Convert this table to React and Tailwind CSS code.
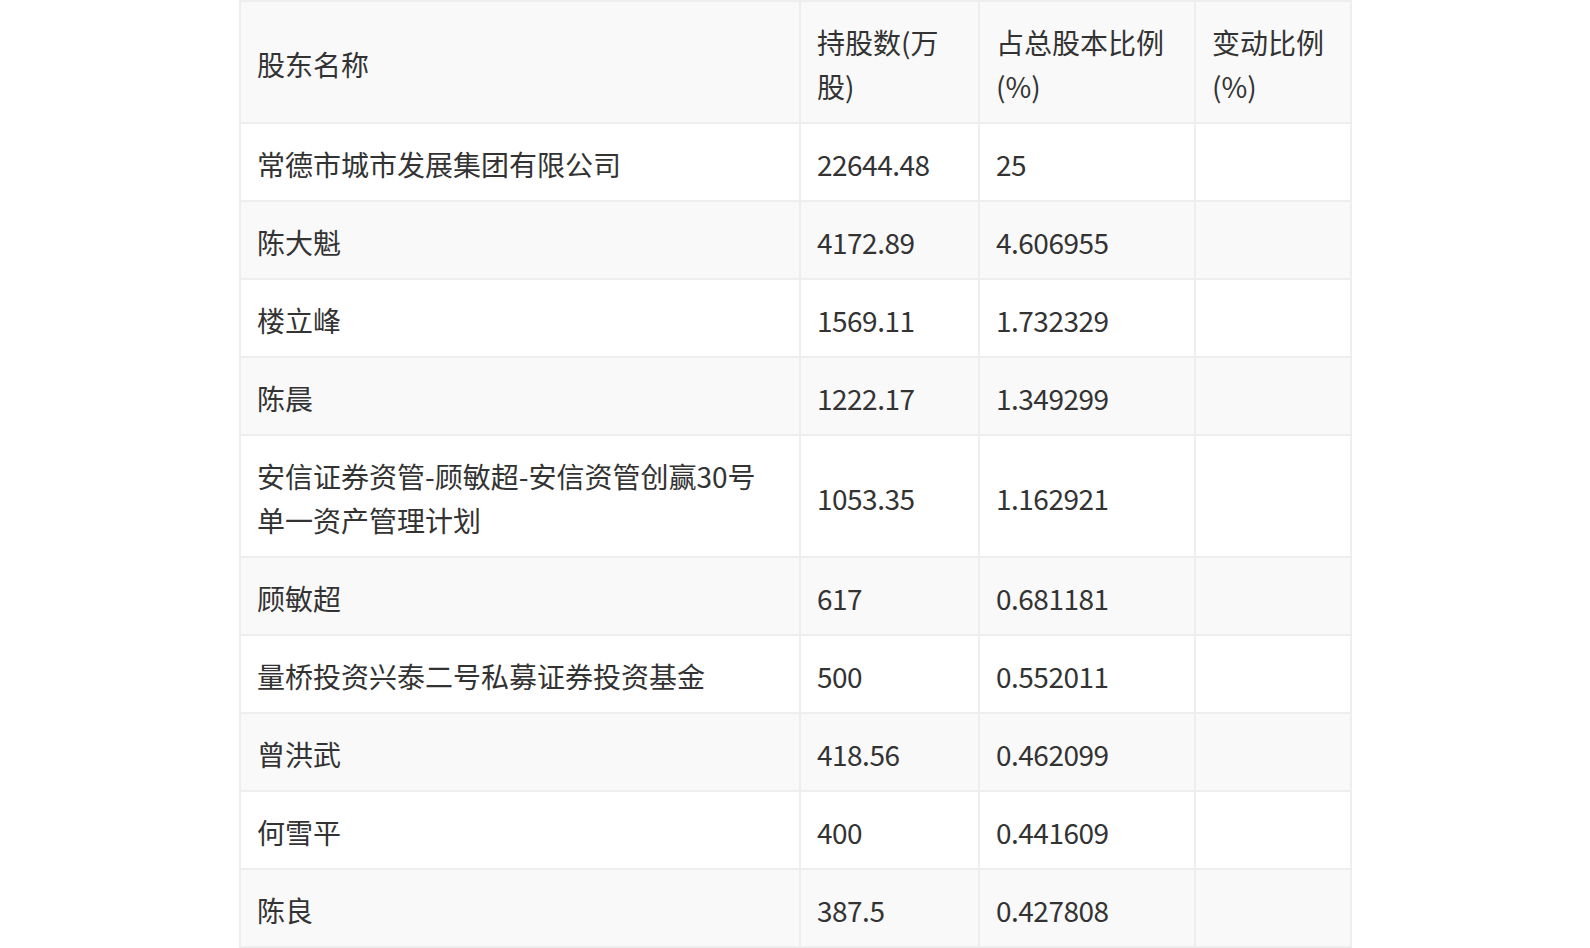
import React from "react";

const rows = [
  [["常德市城市发展集团有限公司"], "22644.48", "25", ""],
  [["陈大魁"], "4172.89", "4.606955", ""],
  [["楼立峰"], "1569.11", "1.732329", ""],
  [["陈晨"], "1222.17", "1.349299", ""],
  [["安信证券资管-顾敏超-安信资管创赢30号", "单一资产管理计划"], "1053.35", "1.162921", ""],
  [["顾敏超"], "617", "0.681181", ""],
  [["量桥投资兴泰二号私募证券投资基金"], "500", "0.552011", ""],
  [["曾洪武"], "418.56", "0.462099", ""],
  [["何雪平"], "400", "0.441609", ""],
  [["陈良"], "387.5", "0.427808", ""],
];

const headers = [
  ["股东名称"],
  ["持股数(万", "股)"],
  ["占总股本比例", "(%)"],
  ["变动比例", "(%)"],
];

function Lines({ lines }) {
  return (
    <>
      {lines.map((l, i) => (
        <React.Fragment key={i}>
          {i > 0 && <br />}
          {l}
        </React.Fragment>
      ))}
    </>
  );
}

const cell =
  "border-r-2 border-b-2 border-[#eeeeee] px-[16px] pt-[18px] pb-[14px] flex items-center whitespace-nowrap";

export default function App() {
  return (
    <div
      className="w-[1590px] h-[948px] bg-white overflow-hidden"
      style={{ fontFamily: '"Noto Sans CJK SC", "Noto Sans", sans-serif' }}
    >
      <div className="ml-[239px] w-[1113px] grid grid-cols-[560px_179px_216px_156px] border-l-2 border-t-2 border-[#eeeeee] text-[28px] leading-[44px] text-[#333333]">
        {headers.map((h, j) => (
          <div key={j} className={`${cell} bg-[#f9f9f9] h-[122px]`}>
            <div>
              <Lines lines={h} />
            </div>
          </div>
        ))}
        {rows.map((r, i) => {
          const bg = i % 2 === 1 ? "bg-[#f9f9f9]" : "bg-white";
          return (
            <React.Fragment key={i}>
              {r.map((c, j) => (
                <div key={j} className={`${cell} ${bg} min-h-[78px]`}>
                  {Array.isArray(c) ? (
                    <div>
                      <Lines lines={c} />
                    </div>
                  ) : (
                    <div className="tracking-[-0.5px]">{c}</div>
                  )}
                </div>
              ))}
            </React.Fragment>
          );
        })}
      </div>
    </div>
  );
}
